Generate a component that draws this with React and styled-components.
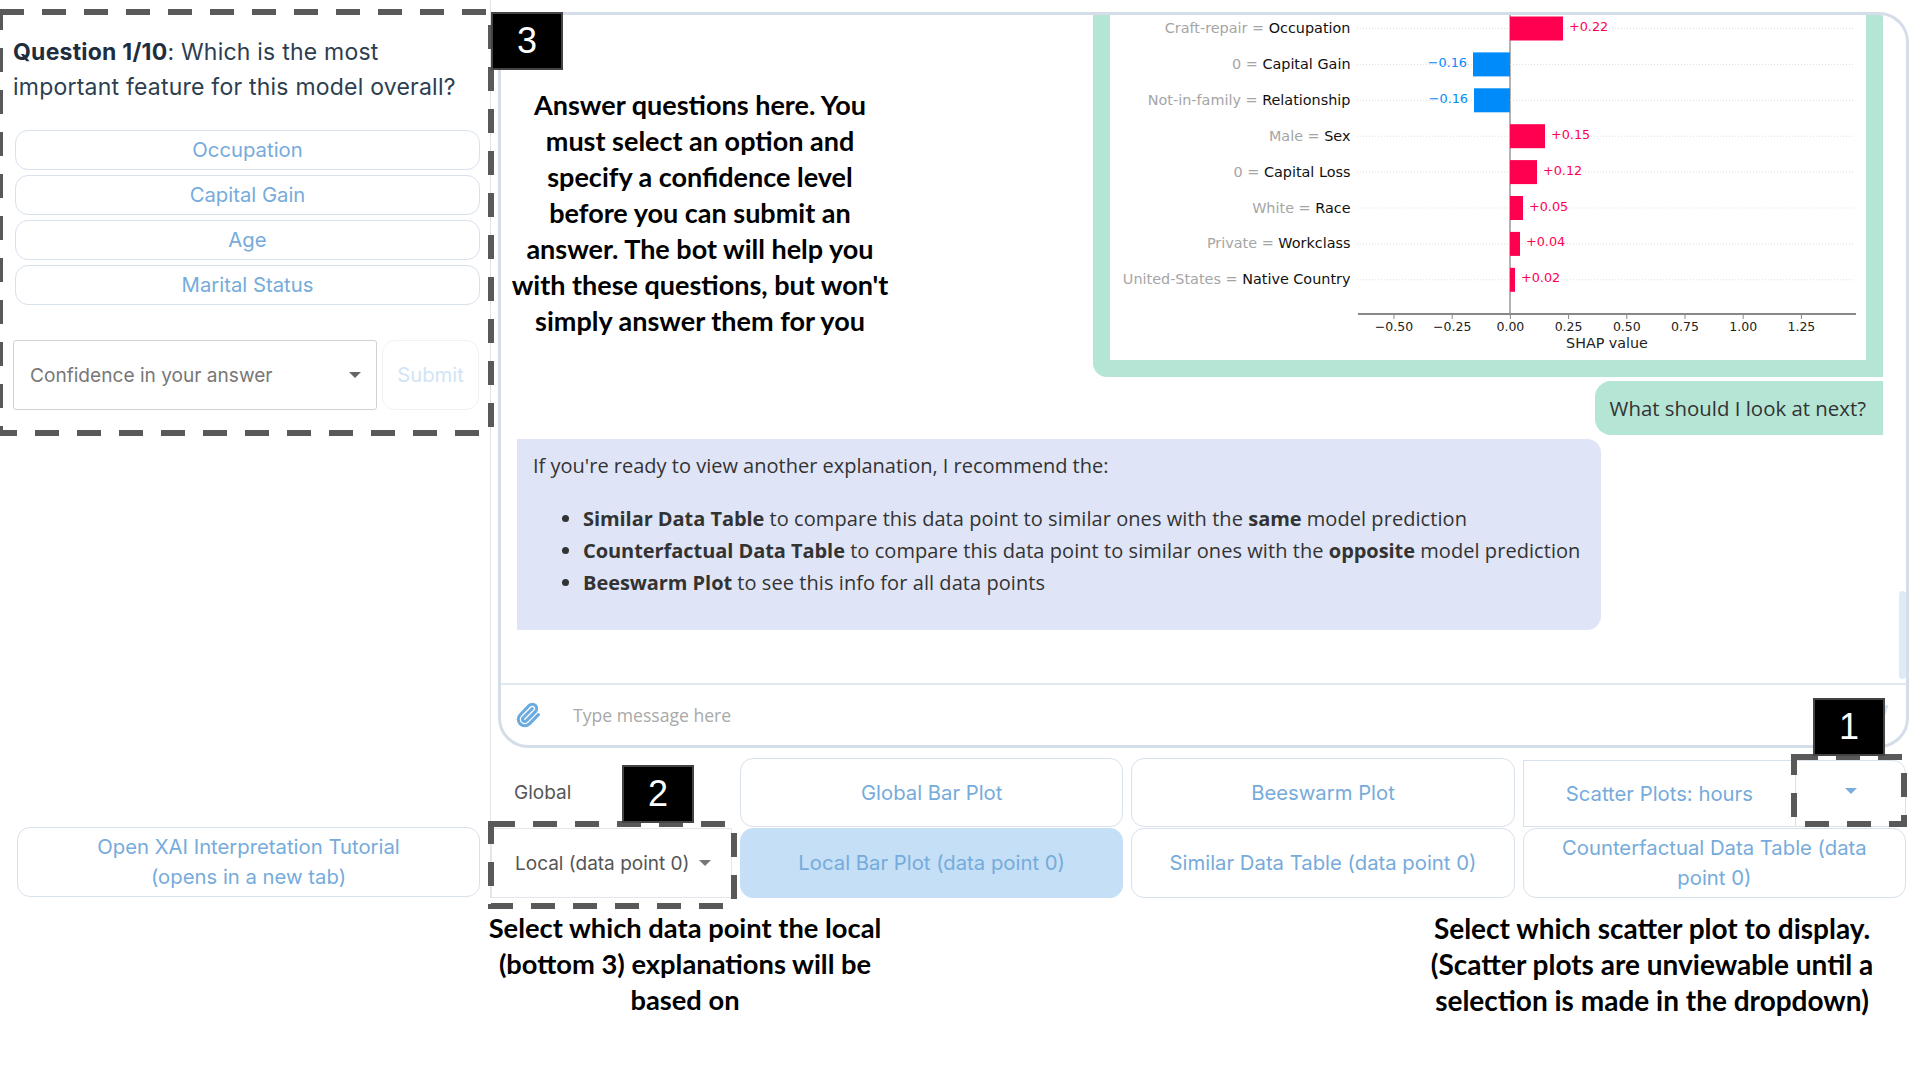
import React from 'react';
import styled, { createGlobalStyle } from 'styled-components';
import { Paperclip, Send } from 'lucide-react';

const GlobalStyle = createGlobalStyle`
  html, body {
    margin: 0;
    padding: 0;
    background: #fff;
    font-family: Inter, "Liberation Sans", sans-serif;
  }
  * { box-sizing: border-box; }
`;

const Page = styled.div`
  position: relative;
  width: 1920px;
  height: 1080px;
  overflow: hidden;
`;
const Columns = styled.div`
  display: grid;
  grid-template-columns: 490px 1fr;
  height: 898px;
`;

/* left column */
const QuestionPanel = styled.div`
  display: flex;
  flex-direction: column;
  justify-content: space-between;
  padding: 35px 10px 1px 13px;
`;
const QuestionText = styled.div`
  font-size: 23px;
  letter-spacing: 0.22px;
  line-height: 35px;
  white-space: nowrap;
  color: #2c3e50;
  b { font-weight: 700; color: #1f2d3d; }
`;
const Options = styled.div`
  display: flex;
  flex-direction: column;
  gap: 5px;
  margin: 25px 0 0 2px;
  width: 465px;
`;
const Button = styled.div`
  display: flex;
  align-items: center;
  justify-content: center;
  text-align: center;
  font-size: 20.3px;
  line-height: 30px;
  color: ${p => (p.$faint ? '#d2e4f5' : '#76abdb')};
  background: ${p => (p.$active ? '#c4dff6' : '#fff')};
  border: 1px solid ${p => (p.$active ? '#c4dff6' : p.$faint ? '#eff3f7' : '#d8e1ec')};
  border-radius: 13px;
  padding: 0 16px;
`;
const Option = styled(Button)`
  height: 40px;
`;
const AnswerRow = styled.div`
  display: flex;
  gap: 5px;
  margin-top: 35px;
  height: 70px;
`;
const ConfidenceSelect = styled.div`
  display: flex;
  align-items: center;
  justify-content: space-between;
  width: 364px;
  padding: 0 15px 0 16px;
  font-size: 19.1px;
  color: #777;
  border: 1.5px solid #d2d2d2;
  border-radius: 3px;
`;
const Caret = styled.span`
  width: 0;
  height: 0;
  border-left: ${p => p.$size}px solid transparent;
  border-right: ${p => p.$size}px solid transparent;
  border-top: ${p => p.$size}px solid ${p => p.$color};
`;
const SubmitButton = styled(Button)`
  width: 97px;
  padding: 0;
`;
const TutorialButton = styled(Button)`
  height: 70px;
  width: 463px;
  margin-left: 4px;
`;
const QuestionTop = styled.div``;

/* right column */
const MainPanel = styled.div`
  display: flex;
  flex-direction: column;
  border-left: 1px solid #e4e4e4;
  padding-top: 12px;
`;
const ChatBox = styled.div`
  position: relative;
  display: flex;
  flex-direction: column;
  height: 736px;
  margin: 0 11px 10px 7px;
  border: 3px solid #d5dee8;
  border-radius: 30px;
  overflow: hidden;
`;
const Messages = styled.div`
  flex: 1;
  min-height: 0;
  display: flex;
  flex-direction: column;
  justify-content: flex-end;
  gap: 4px;
  padding: 0 23px 53px 16px;
  font-family: "Open Sans", sans-serif;
  font-size: 20px;
  color: #333;
`;
const PlotBubble = styled.div`
  align-self: flex-end;
  width: 790px;
  padding: 0 17px 17px 17px;
  background: #b5e5d5;
  border-radius: 0 0 0 14px;
`;
const PlotSvg = styled.svg`
  display: block;
  background: #fff;
`;
const UserBubble = styled.div`
  align-self: flex-end;
  display: flex;
  align-items: center;
  height: 54px;
  padding: 0 17px 0 15px;
  font-size: 20.4px;
  background: #b5e5d5;
  border-radius: 16px 0 0 16px;
`;
const BotBubble = styled.div`
  width: 1084px;
  height: 192px;
  padding: 11px 16px;
  background: #dfe5f7;
  border-radius: 0 14px 14px 0;
  line-height: 32px;
`;
const BotList = styled.ul`
  margin: 21px 0 0;
  padding-left: 50px;
  letter-spacing: 0.06px;
  b { font-weight: 700; letter-spacing: -0.06px; }
`;
const InputBar = styled.div`
  display: flex;
  align-items: center;
  height: 62px;
  padding: 0 17px 0 14px;
  border-top: 2px solid #e3e9f0;
  font-family: "Open Sans", sans-serif;
`;
const Placeholder = styled.span`
  margin-left: 32px;
  flex: 1;
  font-size: 17.6px;
  color: #a9a9a9;
`;
const Scrollbar = styled.div`
  position: absolute;
  right: 0;
  bottom: 66px;
  width: 7px;
  height: 88px;
  border-radius: 4px;
  background: #dfeaf7;
`;
const Controls = styled.div`
  display: grid;
  grid-template-columns: 241px repeat(3, 1fr);
  grid-template-rows: 69px 70px;
  gap: 1px 8px;
  margin-right: 14px;
`;
const RowLabel = styled.div`
  display: flex;
  align-items: center;
  gap: 10px;
  padding-left: 23px;
  font-size: 19px;
  color: #555;
  border: ${p => (p.$boxed ? '1px solid #e3e8ee' : 'none')};
`;
const ScatterGroup = styled.div`
  display: flex;
  margin-top: 2px;
`;
const ScatterMain = styled(Button)`
  flex: 1;
  border-radius: 0;
  border-right: none;
  padding: 0;
`;
const ScatterToggle = styled.div`
  display: flex;
  align-items: center;
  justify-content: center;
  width: 111px;
  border: 1px solid #d8e1ec;
  border-radius: 0 13px 13px 0;
  padding-bottom: 6px;
`;

/* annotations drawn over the app */
const DashedFrame = styled.svg`
  position: absolute;
  left: 0;
  top: 0;
  pointer-events: none;
`;
const Badge = styled.div`
  position: absolute;
  left: ${p => p.$x}px;
  top: ${p => p.$y}px;
  display: flex;
  align-items: center;
  justify-content: center;
  width: 72px;
  height: 58px;
  background: #000;
  border: 2px solid #444;
  color: #fff;
  font-family: "Liberation Sans", sans-serif;
  font-size: 36px;
`;
const Note = styled.div`
  position: absolute;
  left: ${p => p.$x}px;
  top: ${p => p.$y}px;
  width: ${p => p.$w}px;
  text-align: center;
  font-family: Lato, sans-serif;
  font-size: ${p => p.$size}px;
  font-weight: 700;
  line-height: 36px;
  color: #000;
  span { display: block; white-space: nowrap; }
`;

const bars = [
  { value: 'Craft-repair', name: 'Occupation', px: 53, label: '+0.22' },
  { value: '0', name: 'Capital Gain', px: -37, label: '\u22120.16' },
  { value: 'Not-in-family', name: 'Relationship', px: -36, label: '\u22120.16' },
  { value: 'Male', name: 'Sex', px: 35, label: '+0.15' },
  { value: '0', name: 'Capital Loss', px: 27, label: '+0.12' },
  { value: 'White', name: 'Race', px: 13, label: '+0.05' },
  { value: 'Private', name: 'Workclass', px: 10, label: '+0.04' },
  { value: 'United-States', name: 'Native Country', px: 5, label: '+0.02' },
];
const ticks = ['\u22120.50', '\u22120.25', '0.00', '0.25', '0.50', '0.75', '1.00', '1.25'];
const PINK = '#ff0051';
const BLUE = '#008bfb';
const ZERO = 400;
const OFFSET_Y = 14;

const ShapPlot = () => (
  <PlotSvg width="756" height="345" viewBox="0 0 756 345" fontFamily="'DejaVu Sans', sans-serif">
    <line x1={ZERO} x2={ZERO} y1="0" y2={313 - OFFSET_Y} stroke="#666" strokeWidth="1" />
    {bars.map((b, i) => {
      const y = 27.5 + 35.9 * i - OFFSET_Y;
      const color = b.px > 0 ? PINK : BLUE;
      return (
        <g key={b.name}>
          <line x1="247" x2="745" y1={y} y2={y} stroke="#ddd" strokeDasharray="1 2" />
          <rect x={b.px > 0 ? ZERO : ZERO + b.px} y={y - 12} width={Math.abs(b.px)} height="24" fill={color} />
          <text
            x={b.px > 0 ? ZERO + b.px + 6 : ZERO + b.px - 6}
            y={y - 1}
            dominantBaseline="middle"
            textAnchor={b.px > 0 ? 'start' : 'end'}
            fontSize="12.8"
            fill={color}
          >
            {b.label}
          </text>
          <text x="240.5" y={y + 0.5} dominantBaseline="middle" textAnchor="end" fontSize="14.4">
            <tspan fill="#a5a5a5">{b.value} = </tspan>
            <tspan fill="#111">{b.name}</tspan>
          </text>
        </g>
      );
    })}
    <line x1="248" x2="746" y1={313 - OFFSET_Y} y2={313 - OFFSET_Y} stroke="#888" strokeWidth="2" />
    {ticks.map((t, i) => {
      const x = 284 + i * 58.2;
      return (
        <g key={t}>
          <line x1={x} x2={x} y1={313 - OFFSET_Y} y2={318 - OFFSET_Y} stroke="#888" />
          <text x={x} y={326 - OFFSET_Y} dominantBaseline="middle" textAnchor="middle" fontSize="12.5" fill="#222">
            {t}
          </text>
        </g>
      );
    })}
    <text x="497" y={343 - OFFSET_Y} dominantBaseline="middle" textAnchor="middle" fontSize="14.3" fill="#222">
      SHAP value
    </text>
  </PlotSvg>
);

const frames = [
  { x: 0, y: 12, w: 491, h: 421 },
  { x: 491, y: 824, w: 243, h: 82 },
  { x: 1794, y: 757, w: 110, h: 67 },
];

const App = () => (
  <Page>
    <GlobalStyle />
    <Columns>
      <QuestionPanel>
        <QuestionTop>
          <QuestionText>
            <b>Question 1/10</b>: Which is the most
            <br />
            important feature for this model overall?
          </QuestionText>
          <Options>
            {['Occupation', 'Capital Gain', 'Age', 'Marital Status'].map(o => (
              <Option key={o}>{o}</Option>
            ))}
          </Options>
          <AnswerRow>
            <ConfidenceSelect>
              Confidence in your answer
              <Caret $size={6} $color="#666" />
            </ConfidenceSelect>
            <SubmitButton $faint>Submit</SubmitButton>
          </AnswerRow>
        </QuestionTop>
        <TutorialButton>
          Open XAI Interpretation Tutorial
          <br />
          (opens in a new tab)
        </TutorialButton>
      </QuestionPanel>

      <MainPanel>
        <ChatBox>
          <Messages>
            <PlotBubble>
              <ShapPlot />
            </PlotBubble>
            <UserBubble>What should I look at next?</UserBubble>
            <BotBubble>
              If you're ready to view another explanation, I recommend the:
              <BotList>
                <li>
                  <b>Similar Data Table</b> to compare this data point to similar ones with the <b>same</b> model
                  prediction
                </li>
                <li>
                  <b>Counterfactual Data Table</b> to compare this data point to similar ones with the{' '}
                  <b>opposite</b> model prediction
                </li>
                <li>
                  <b>Beeswarm Plot</b> to see this info for all data points
                </li>
              </BotList>
            </BotBubble>
          </Messages>
          <InputBar>
            <Paperclip size={26} color="#6aabe0" strokeWidth={2.8} />
            <Placeholder>Type message here</Placeholder>
            <Send size={22} color="#d5e5f5" />
          </InputBar>
          <Scrollbar />
        </ChatBox>

        <Controls>
          <RowLabel>Global</RowLabel>
          <Button>Global Bar Plot</Button>
          <Button>Beeswarm Plot</Button>
          <ScatterGroup>
            <ScatterMain>Scatter Plots: hours</ScatterMain>
            <ScatterToggle>
              <Caret $size={6} $color="#7aaddb" />
            </ScatterToggle>
          </ScatterGroup>
          <RowLabel $boxed>
            Local (data point 0)
            <Caret $size={6} $color="#777" />
          </RowLabel>
          <Button $active>Local Bar Plot (data point 0)</Button>
          <Button>Similar Data Table (data point 0)</Button>
          <Button>Counterfactual Data Table (data point 0)</Button>
        </Controls>
      </MainPanel>
    </Columns>

    <DashedFrame width="1920" height="1080" fill="none">
      {frames.map(f => (
        <rect key={f.x} x={f.x} y={f.y} width={f.w} height={f.h} stroke="#595959" strokeWidth="6" strokeDasharray="24 18" />
      ))}
    </DashedFrame>

    <Badge $x={491} $y={12}>3</Badge>
    <Badge $x={622} $y={765}>2</Badge>
    <Badge $x={1813} $y={698}>1</Badge>

    <Note $x={500} $y={87} $w={400} $size={27}>
      <span>Answer questions here. You</span>
      <span>must select an option and</span>
      <span>specify a confidence level</span>
      <span>before you can submit an</span>
      <span>answer. The bot will help you</span>
      <span>with these questions, but won't</span>
      <span>simply answer them for you</span>
    </Note>
    <Note $x={435} $y={910} $w={500} $size={27.3}>
      <span>Select which data point the local</span>
      <span>(bottom 3) explanations will be</span>
      <span>based on</span>
    </Note>
    <Note $x={1402} $y={910} $w={500} $size={28}>
      <span>Select which scatter plot to display.</span>
      <span>(Scatter plots are unviewable until a</span>
      <span>selection is made in the dropdown)</span>
    </Note>
  </Page>
);

export default App;
